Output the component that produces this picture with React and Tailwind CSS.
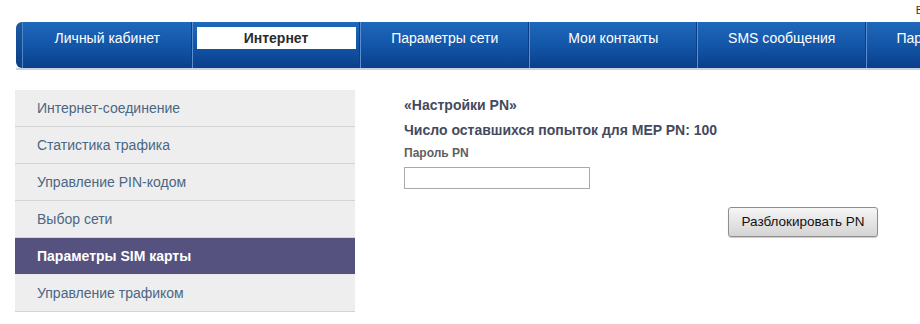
import React from "react";

const tabs = [
    { label: "Личный кабинет" },
    { label: "Интернет", active: true },
    { label: "Параметры сети" },
    { label: "Мои контакты" },
    { label: "SMS сообщения" },
    { label: "Параметры" },
];

const menu = [
    "Интернет-соединение",
    "Статистика трафика",
    "Управление PIN-кодом",
    "Выбор сети",
    "Параметры SIM карты",
    "Управление трафиком",
];

export default function App() {
    return (
        <div className="relative w-[920px] h-[324px] overflow-hidden bg-white font-['Liberation_Sans',Arial,sans-serif]">
            {/* logout link cut at the right edge */}
            <div className="absolute right-[-3px] top-[2px] text-[11px] text-[#333]">В</div>

            {/* top nav */}
            <div className="flex ml-[16px] mt-[22px] h-[48px] w-[940px] border-b-[2px] border-[#c9d3e0]">
                <div className="w-[7px] shrink-0 rounded-l-[6px] bg-gradient-to-b from-[#1c5aa6] to-[#0c3f86] border-r border-[#4f86c6]" />
                <div className="flex flex-1 bg-gradient-to-b from-[#2068bb] via-[#1356a8] to-[#0a3f8c]">
                    {tabs.map((t, i) => (
                        <div
                            key={t.label}
                            className={
                                "flex w-[168.5px] shrink-0 pt-[5px] " +
                                (i > 0 ? "border-l border-[#5c8dd0] shadow-[-1px_0_0_#0b3e85]" : "")
                            }
                        >
                            {t.active ? (
                                <div className="ml-[4px] w-[159px] h-[22px] bg-white flex items-center justify-center text-[14px] font-bold text-[#2b2b2b]">
                                    {t.label}
                                </div>
                            ) : (
                                <div
                                    className={
                                        "w-full h-[23px] flex items-center text-[14px] text-white " +
                                        (i === 5 ? "pl-[30px]" : "justify-center")
                                    }
                                >
                                    {t.label}
                                </div>
                            )}
                        </div>
                    ))}
                </div>
            </div>

            <div className="flex mt-[20px]">
                {/* side menu */}
                <div className="ml-[15px] w-[340px] shrink-0">
                    {menu.map((m, i) =>
                        i === 4 ? (
                            <div
                                key={m}
                                className="h-[37px] flex items-center pl-[22px] bg-[#55527f] text-[14px] font-bold text-white border-b border-[#e9e9e9]"
                            >
                                {m}
                            </div>
                        ) : (
                            <div
                                key={m}
                                className="h-[37px] flex items-center pl-[22px] bg-[#eeeeee] text-[14px] text-[#4a6784] border-b border-[#d4d4d4]"
                            >
                                {m}
                            </div>
                        )
                    )}
                </div>

                {/* content */}
                <div className="ml-[49px] pt-[6px]">
                    <div className="text-[14px] leading-[18px] font-bold text-[#444a5e]">«Настройки PN»</div>
                    <div className="mt-[7px] text-[14px] leading-[18px] font-bold text-[#444a5e]">
                        Число оставшихся попыток для MEP PN: 100
                    </div>
                    <div className="mt-[6px] text-[12px] leading-[16px] font-bold text-[#606060]">Пароль PN</div>
                    <input
                        type="text"
                        className="mt-[6px] block w-[186px] h-[22px] border border-[#a9a9a9] bg-white outline-none"
                    />
                    <div className="flex justify-end w-[474px] mt-[18px]">
                        <button className="h-[30px] w-[150px] rounded-[3px] border border-[#8e8e8e] bg-gradient-to-b from-[#f6f6f6] to-[#d4d4d4] text-[13.5px] text-[#111] shadow-[0_1px_1px_rgba(0,0,0,0.2)]">
                            Разблокировать PN
                        </button>
                    </div>
                </div>
            </div>
        </div>
    );
}
